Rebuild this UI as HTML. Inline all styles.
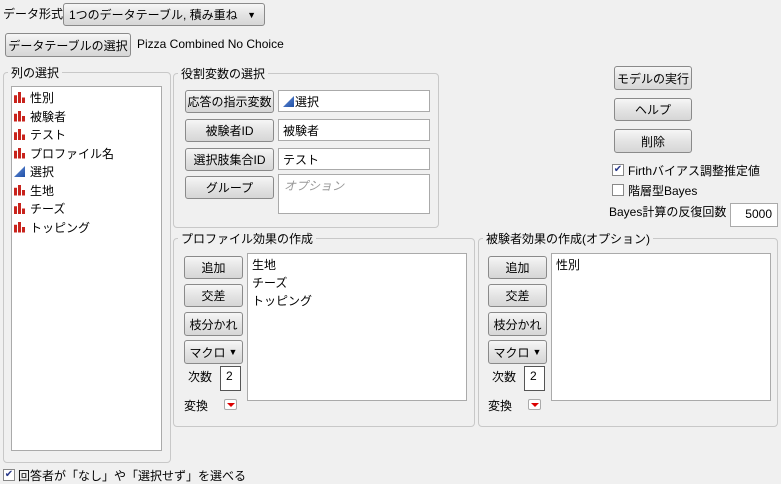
<!DOCTYPE html><html><head><meta charset="utf-8"><style>
*{box-sizing:border-box}
body{margin:0;width:781px;height:484px;background:#f0f0f0;font-family:"Liberation Sans","Noto Sans CJK JP",sans-serif;font-size:12px;color:#000;position:relative;overflow:hidden}
.a{position:absolute;white-space:nowrap}
.btn{position:absolute;border:1px solid #8a8a8a;border-radius:3px;background:linear-gradient(#f6f6f6,#e4e4e4 50%,#d6d6d6);text-align:center;font-size:12px;display:flex;align-items:center;justify-content:center}
.grp{position:absolute;border:1px solid #c8c8c8;border-radius:4px}
.lg{position:absolute;background:#f0f0f0;padding:0 3px;font-size:12px;top:-9px;left:4px}
.box{position:absolute;background:#fff;border:1px solid #aaa}
.ic{display:inline-block;width:11px;height:11px;margin-right:5px;vertical-align:-1px;background:linear-gradient(90deg,#c8231c 0 3px,transparent 3px 4px,#c8231c 4px 7px,transparent 7px 8px,#c8231c 8px);clip-path:polygon(0 30%,3px 30%,3px 0,7px 0,7px 50%,100% 50%,100% 100%,0 100%)}
.tri{display:inline-block;width:11px;height:11px;margin-right:5px;vertical-align:-1px;background:linear-gradient(135deg,#6c94d8,#1e4fa8);clip-path:polygon(100% 0,100% 100%,0 100%)}
.li{height:18.5px;line-height:18px}
.cb{position:absolute;width:12px;height:12px;border:1px solid #888;background:#fff;font-size:10px;line-height:10px;text-align:center;color:#2a3a8a}
.rd{position:absolute;width:13px;height:11px;border:1px solid #aaa;background:#fff;border-radius:2px}
.rd:after{content:"";position:absolute;left:2px;top:3px;border-left:4px solid transparent;border-right:4px solid transparent;border-top:4px solid #d00}
</style></head><body>
<div class="a" style="left:3px;top:5px">データ形式</div>
<div class="btn" style="left:63px;top:3px;width:202px;height:23px;justify-content:flex-start;padding-left:5px">1つのデータテーブル, 積み重ね<span style="position:absolute;right:8px;font-size:9px">▼</span></div>
<div class="btn" style="left:5px;top:33px;width:126px;height:24px">データテーブルの選択</div>
<div class="a" style="left:137px;top:37px">Pizza Combined No Choice</div>

<div class="grp" style="left:3px;top:72px;width:168px;height:391px"><span class="lg">列の選択</span></div>
<div class="box" style="left:11px;top:86px;width:151px;height:365px;padding:2px 0 0 2px">
<div class="li"><span class="ic"></span>性別</div>
<div class="li"><span class="ic"></span>被験者</div>
<div class="li"><span class="ic"></span>テスト</div>
<div class="li"><span class="ic"></span>プロファイル名</div>
<div class="li"><span class="tri"></span>選択</div>
<div class="li"><span class="ic"></span>生地</div>
<div class="li"><span class="ic"></span>チーズ</div>
<div class="li"><span class="ic"></span>トッピング</div>
</div>

<div class="grp" style="left:173px;top:73px;width:266px;height:155px"><span class="lg">役割変数の選択</span></div>
<div class="btn" style="left:185px;top:90px;width:89px;height:23px">応答の指示変数</div>
<div class="btn" style="left:185px;top:119px;width:89px;height:23px">被験者ID</div>
<div class="btn" style="left:185px;top:148px;width:89px;height:23px">選択肢集合ID</div>
<div class="btn" style="left:185px;top:176px;width:89px;height:23px">グループ</div>
<div class="box" style="left:278px;top:90px;width:152px;height:22px;padding:2px 4px"><span class="tri" style="margin-right:1px"></span>選択</div>
<div class="box" style="left:278px;top:119px;width:152px;height:22px;padding:2px 4px">被験者</div>
<div class="box" style="left:278px;top:148px;width:152px;height:22px;padding:2px 4px">テスト</div>
<div class="box" style="left:278px;top:174px;width:152px;height:40px;padding:2px 5px;color:#999;font-style:italic">オプション</div>

<div class="btn" style="left:614px;top:66px;width:78px;height:24px">モデルの実行</div>
<div class="btn" style="left:614px;top:98px;width:78px;height:23px">ヘルプ</div>
<div class="btn" style="left:614px;top:129px;width:78px;height:24px">削除</div>
<div class="cb" style="left:612px;top:164px">✔</div><div class="a" style="left:628px;top:162px">Firthバイアス調整推定値</div>
<div class="cb" style="left:612px;top:184px"></div><div class="a" style="left:628px;top:182px">階層型Bayes</div>
<div class="a" style="left:609px;top:203px">Bayes計算の反復回数</div>
<div class="box" style="left:730px;top:203px;width:48px;height:24px;text-align:right;padding:3px 5px">5000</div>

<div class="grp" style="left:173px;top:238px;width:302px;height:189px"><span class="lg">プロファイル効果の作成</span></div>
<div class="btn" style="left:184px;top:256px;width:59px;height:23px">追加</div>
<div class="btn" style="left:184px;top:284px;width:59px;height:23px">交差</div>
<div class="btn" style="left:184px;top:312px;width:59px;height:24px">枝分かれ</div>
<div class="btn" style="left:184px;top:340px;width:59px;height:24px">マクロ <span style="font-size:9px;margin-left:3px">▼</span></div>
<div class="a" style="left:188px;top:368px">次数</div>
<div class="box" style="left:220px;top:366px;width:21px;height:25px;padding:2px 5px;border-color:#555">2</div>
<div class="a" style="left:184px;top:397px">変換</div>
<div class="rd" style="left:224px;top:399px"></div>
<div class="box" style="left:247px;top:253px;width:220px;height:148px;padding:2px 4px;line-height:18px">生地<br>チーズ<br>トッピング</div>

<div class="grp" style="left:478px;top:238px;width:300px;height:189px"><span class="lg">被験者効果の作成(オプション)</span></div>
<div class="btn" style="left:488px;top:256px;width:59px;height:23px">追加</div>
<div class="btn" style="left:488px;top:284px;width:59px;height:23px">交差</div>
<div class="btn" style="left:488px;top:312px;width:59px;height:24px">枝分かれ</div>
<div class="btn" style="left:488px;top:340px;width:59px;height:24px">マクロ <span style="font-size:9px;margin-left:3px">▼</span></div>
<div class="a" style="left:492px;top:368px">次数</div>
<div class="box" style="left:524px;top:366px;width:21px;height:25px;padding:2px 5px;border-color:#555">2</div>
<div class="a" style="left:488px;top:397px">変換</div>
<div class="rd" style="left:528px;top:399px"></div>
<div class="box" style="left:551px;top:253px;width:220px;height:148px;padding:2px 4px;line-height:18px">性別</div>

<div class="cb" style="left:3px;top:469px">✔</div><div class="a" style="left:18px;top:467px">回答者が「なし」や「選択せず」を選べる</div>
</body></html>
